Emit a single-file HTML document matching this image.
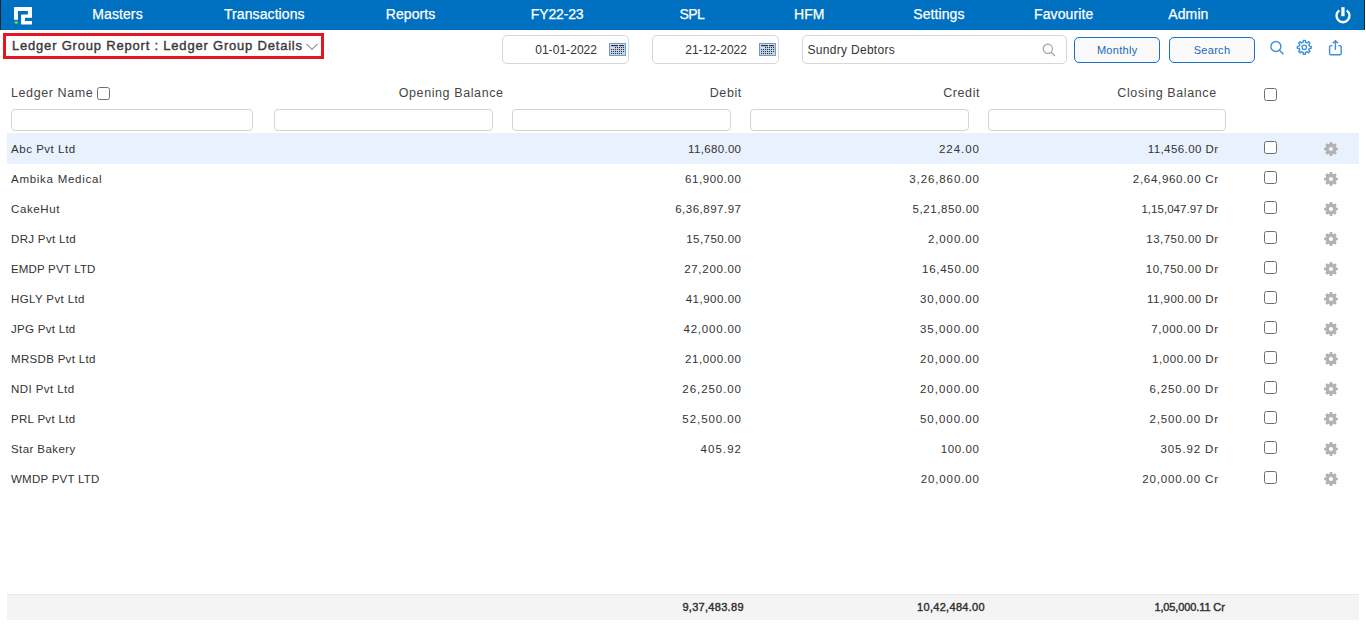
<!DOCTYPE html>
<html><head><meta charset="utf-8"><title>Ledger Group Report</title>
<style>
*{margin:0;padding:0;box-sizing:border-box}
html,body{width:1366px;height:625px;overflow:hidden;background:#fff}
body{position:relative;font-family:"Liberation Sans",sans-serif;color:#333}
.t{position:absolute;white-space:nowrap}
.a{position:absolute}
.nav{position:absolute;left:0;top:0;width:1365px;height:30px;background:#0070c0;border-left:1px solid #23262b;border-right:1px solid #23262b}
.inp{position:absolute;border:1px solid #d6d6d6;border-radius:5px;background:#fff}
.fil{position:absolute;top:109px;height:22px;border:1px solid #d3d3d3;border-radius:4px;background:#fff}
.btn{position:absolute;top:37px;width:86px;height:26px;border:1.5px solid #1672c8;border-radius:5px;background:#fafafa}
.cb{position:absolute;width:13px;height:13px;border:1px solid #6f6f6f;border-radius:2.5px;background:#fff}
.hl{position:absolute;left:7px;top:133px;width:1352px;height:31px;background:#e9f1fe}
.foot{position:absolute;left:7px;top:594px;width:1352px;height:26px;background:#f4f4f4;border-top:1px solid #eaeaea}
</style></head><body>
<div class="nav"></div>
<svg class="a" style="left:13px;top:6px" width="21" height="21" viewBox="0 0 21 21">
<path fill="#fff" stroke="#fff" stroke-width="1.2" stroke-linejoin="round" d="M1.6 1.7H18.4V11.2H11.4V15.5H18.4V17.9H8.7V9H15.5V4.3H4.4V13.2H1.6Z"/>
<circle cx="3.2" cy="16.5" r="1.7" fill="#3ee43a"/>
</svg>
<div class="t" style="top:5.75px;font-size:14px;line-height:16.8px;color:#fff;letter-spacing:0.1px;left:-82.5px;width:400px;text-align:center;-webkit-text-stroke:0.25px #fff;">Masters</div>
<div class="t" style="top:5.75px;font-size:14px;line-height:16.8px;color:#fff;letter-spacing:0.1px;left:64.30000000000001px;width:400px;text-align:center;-webkit-text-stroke:0.25px #fff;">Transactions</div>
<div class="t" style="top:5.75px;font-size:14px;line-height:16.8px;color:#fff;letter-spacing:0.1px;left:210.60000000000002px;width:400px;text-align:center;-webkit-text-stroke:0.25px #fff;">Reports</div>
<div class="t" style="top:5.75px;font-size:14px;line-height:16.8px;color:#fff;letter-spacing:-0.15px;left:357.20000000000005px;width:400px;text-align:center;-webkit-text-stroke:0.25px #fff;">FY22-23</div>
<div class="t" style="top:5.75px;font-size:14px;line-height:16.8px;color:#fff;letter-spacing:-0.6px;left:491.9px;width:400px;text-align:center;-webkit-text-stroke:0.25px #fff;">SPL</div>
<div class="t" style="top:5.75px;font-size:14px;line-height:16.8px;color:#fff;letter-spacing:0.1px;left:609.3px;width:400px;text-align:center;-webkit-text-stroke:0.25px #fff;">HFM</div>
<div class="t" style="top:5.75px;font-size:14px;line-height:16.8px;color:#fff;letter-spacing:0.1px;left:738.9px;width:400px;text-align:center;-webkit-text-stroke:0.25px #fff;">Settings</div>
<div class="t" style="top:5.75px;font-size:14px;line-height:16.8px;color:#fff;letter-spacing:0.1px;left:863.7px;width:400px;text-align:center;-webkit-text-stroke:0.25px #fff;">Favourite</div>
<div class="t" style="top:5.75px;font-size:14px;line-height:16.8px;color:#fff;letter-spacing:0.1px;left:988.4000000000001px;width:400px;text-align:center;-webkit-text-stroke:0.25px #fff;">Admin</div>
<svg class="a" style="left:1332.6px;top:5px" width="20" height="20" viewBox="0 0 20 20">
<path d="M6.3 5.4A6.5 6.5 0 1 0 13.7 5.4" fill="none" stroke="#fff" stroke-width="2.3"/>
<rect x="8.3" y="2.2" width="3.3" height="9" fill="#fff"/>
</svg>
<div class="a" style="left:3px;top:33px;width:321px;height:26px;border:3px solid #e8141f"></div>
<div class="t" style="top:37.70px;font-size:13px;line-height:15.6px;color:#3a3a3a;letter-spacing:0.8px;left:12px;-webkit-text-stroke:0.4px #3a3a3a;">Ledger Group Report : Ledger Group Details</div>
<svg class="a" style="left:305px;top:42px" width="14" height="10" viewBox="0 0 14 10"><path d="M1.5 2l5.5 5.5 5.5-5.5" fill="none" stroke="#9a9a9a" stroke-width="1.1"/></svg>
<div class="inp" style="left:502px;top:35px;width:127px;height:29px"></div>
<div class="t" style="top:42.94px;font-size:12px;line-height:14.4px;color:#333;letter-spacing:0.05px;right:768.95px;text-align:right;">01-01-2022</div>
<svg class="a" style="left:609px;top:43px" width="17" height="13" viewBox="0 0 17 13"><rect x="0.5" y="0.5" width="16" height="12" fill="#cadcf0" stroke="#6d9bd0"/><rect x="2" y="2" width="7" height="1.2" fill="#333"/><rect x="10" y="2" width="5" height="1.2" fill="#333"/><rect x="6" y="4" width="1.1" height="1.1" fill="#333"/><rect x="8" y="4" width="1.1" height="1.1" fill="#333"/><rect x="10" y="4" width="1.1" height="1.1" fill="#333"/><rect x="12" y="4" width="1.1" height="1.1" fill="#333"/><rect x="14" y="4" width="1.1" height="1.1" fill="#333"/><rect x="2" y="6" width="1.1" height="1.1" fill="#333"/><rect x="4" y="6" width="1.1" height="1.1" fill="#333"/><rect x="6" y="6" width="1.1" height="1.1" fill="#333"/><rect x="8" y="6" width="1.1" height="1.1" fill="#333"/><rect x="10" y="6" width="1.1" height="1.1" fill="#333"/><rect x="12" y="6" width="1.1" height="1.1" fill="#333"/><rect x="14" y="6" width="1.1" height="1.1" fill="#333"/><rect x="2" y="8" width="1.1" height="1.1" fill="#333"/><rect x="4" y="8" width="1.1" height="1.1" fill="#333"/><rect x="6" y="8" width="1.1" height="1.1" fill="#333"/><rect x="8" y="8" width="1.1" height="1.1" fill="#333"/><rect x="10" y="8" width="1.1" height="1.1" fill="#333"/><rect x="12" y="8" width="1.1" height="1.1" fill="#333"/><rect x="14" y="8" width="1.1" height="1.1" fill="#333"/><rect x="2" y="10" width="1.1" height="1.1" fill="#333"/><rect x="4" y="10" width="1.1" height="1.1" fill="#333"/><rect x="6" y="10" width="1.1" height="1.1" fill="#333"/><rect x="8" y="10" width="1.1" height="1.1" fill="#333"/><rect x="10" y="10" width="1.1" height="1.1" fill="#333"/><rect x="12" y="10" width="1.1" height="1.1" fill="#333"/></svg>
<div class="inp" style="left:652px;top:35px;width:127px;height:29px"></div>
<div class="t" style="top:42.94px;font-size:12px;line-height:14.4px;color:#333;letter-spacing:0.05px;right:618.95px;text-align:right;">21-12-2022</div>
<svg class="a" style="left:759px;top:43px" width="17" height="13" viewBox="0 0 17 13"><rect x="0.5" y="0.5" width="16" height="12" fill="#cadcf0" stroke="#6d9bd0"/><rect x="2" y="2" width="7" height="1.2" fill="#333"/><rect x="10" y="2" width="5" height="1.2" fill="#333"/><rect x="6" y="4" width="1.1" height="1.1" fill="#333"/><rect x="8" y="4" width="1.1" height="1.1" fill="#333"/><rect x="10" y="4" width="1.1" height="1.1" fill="#333"/><rect x="12" y="4" width="1.1" height="1.1" fill="#333"/><rect x="14" y="4" width="1.1" height="1.1" fill="#333"/><rect x="2" y="6" width="1.1" height="1.1" fill="#333"/><rect x="4" y="6" width="1.1" height="1.1" fill="#333"/><rect x="6" y="6" width="1.1" height="1.1" fill="#333"/><rect x="8" y="6" width="1.1" height="1.1" fill="#333"/><rect x="10" y="6" width="1.1" height="1.1" fill="#333"/><rect x="12" y="6" width="1.1" height="1.1" fill="#333"/><rect x="14" y="6" width="1.1" height="1.1" fill="#333"/><rect x="2" y="8" width="1.1" height="1.1" fill="#333"/><rect x="4" y="8" width="1.1" height="1.1" fill="#333"/><rect x="6" y="8" width="1.1" height="1.1" fill="#333"/><rect x="8" y="8" width="1.1" height="1.1" fill="#333"/><rect x="10" y="8" width="1.1" height="1.1" fill="#333"/><rect x="12" y="8" width="1.1" height="1.1" fill="#333"/><rect x="14" y="8" width="1.1" height="1.1" fill="#333"/><rect x="2" y="10" width="1.1" height="1.1" fill="#333"/><rect x="4" y="10" width="1.1" height="1.1" fill="#333"/><rect x="6" y="10" width="1.1" height="1.1" fill="#333"/><rect x="8" y="10" width="1.1" height="1.1" fill="#333"/><rect x="10" y="10" width="1.1" height="1.1" fill="#333"/><rect x="12" y="10" width="1.1" height="1.1" fill="#333"/></svg>
<div class="inp" style="left:802px;top:35px;width:265px;height:29px"></div>
<div class="t" style="top:42.94px;font-size:12px;line-height:14.4px;color:#333;letter-spacing:0.3px;left:807.5px;">Sundry Debtors</div>
<svg class="a" style="left:1042px;top:43px" width="14" height="14" viewBox="0 0 14 14"><circle cx="5.8" cy="5.8" r="4.6" fill="none" stroke="#a3a3a3" stroke-width="1.2"/><path d="M9.2 9.2l3.8 3.8" stroke="#a3a3a3" stroke-width="1.3"/></svg>
<div class="btn" style="left:1074px"></div>
<div class="t" style="top:43.59px;font-size:11px;line-height:13.2px;color:#2366bd;letter-spacing:0.3px;left:917.2px;width:400px;text-align:center;">Monthly</div>
<div class="btn" style="left:1169px"></div>
<div class="t" style="top:43.59px;font-size:11px;line-height:13.2px;color:#2366bd;letter-spacing:0.3px;left:1012px;width:400px;text-align:center;">Search</div>
<svg class="a" style="left:1269px;top:40px" width="16" height="16" viewBox="0 0 16 16"><circle cx="6.9" cy="6.5" r="5" fill="none" stroke="#3e8fd7" stroke-width="1.4"/><path d="M10.4 10.2l4 4" stroke="#3e8fd7" stroke-width="1.5"/></svg>
<svg class="a" style="left:1296px;top:39px" width="17" height="17" viewBox="0 0 17 17"><path d="M7.09 3.24 L7.35 1.37 L9.25 1.37 L9.51 3.24 L11.02 3.87 L12.53 2.72 L13.88 4.07 L12.73 5.58 L13.36 7.09 L15.23 7.35 L15.23 9.25 L13.36 9.51 L12.73 11.02 L13.88 12.53 L12.53 13.88 L11.02 12.73 L9.51 13.36 L9.25 15.23 L7.35 15.23 L7.09 13.36 L5.58 12.73 L4.07 13.88 L2.72 12.53 L3.87 11.02 L3.24 9.51 L1.37 9.25 L1.37 7.35 L3.24 7.09 L3.87 5.58 L2.72 4.07 L4.07 2.72 L5.58 3.87Z" fill="none" stroke="#3e8fd7" stroke-width="1.4" stroke-linejoin="round"/><circle cx="8.3" cy="8.3" r="2.2" fill="none" stroke="#3e8fd7" stroke-width="1.3"/></svg>
<svg class="a" style="left:1327px;top:39px" width="17" height="17" viewBox="0 0 17 17"><path d="M5.5 6.6H3.9a1.3 1.3 0 0 0-1.3 1.3v6.5a1.3 1.3 0 0 0 1.3 1.3h9a1.3 1.3 0 0 0 1.3-1.3V7.9a1.3 1.3 0 0 0-1.3-1.3H11.3" fill="none" stroke="#3e8fd7" stroke-width="1.4"/><path d="M8.4 11V1.8M5.8 4.3l2.6-2.6 2.6 2.6" fill="none" stroke="#3e8fd7" stroke-width="1.4"/></svg>
<div class="t" style="top:86.17px;font-size:12.5px;line-height:15.0px;color:#454545;letter-spacing:0.6px;left:11px;">Ledger Name</div>
<div class="cb" style="left:97px;top:87px"></div>
<div class="t" style="top:86.17px;font-size:12.5px;line-height:15.0px;color:#454545;letter-spacing:0.6px;right:862.40px;text-align:right;">Opening Balance</div>
<div class="t" style="top:86.17px;font-size:12.5px;line-height:15.0px;color:#454545;letter-spacing:0.6px;right:624.10px;text-align:right;">Debit</div>
<div class="t" style="top:86.17px;font-size:12.5px;line-height:15.0px;color:#454545;letter-spacing:0.6px;right:385.90px;text-align:right;">Credit</div>
<div class="t" style="top:86.17px;font-size:12.5px;line-height:15.0px;color:#454545;letter-spacing:0.6px;right:149.30px;text-align:right;">Closing Balance</div>
<div class="cb" style="left:1264px;top:88px"></div>
<div class="fil" style="left:11px;width:242px"></div>
<div class="fil" style="left:274px;width:219px"></div>
<div class="fil" style="left:512px;width:219px"></div>
<div class="fil" style="left:750px;width:219px"></div>
<div class="fil" style="left:988px;width:238px"></div>
<div class="hl"></div>
<div class="t" style="top:143.12px;font-size:11.5px;line-height:13.8px;color:#333;letter-spacing:0.53px;left:11px;">Abc Pvt Ltd</div>
<div class="t" style="top:143.12px;font-size:11.5px;line-height:13.8px;color:#333;letter-spacing:0.325px;right:624.67px;text-align:right;">11,680.00</div>
<div class="t" style="top:143.12px;font-size:11.5px;line-height:13.8px;color:#333;letter-spacing:0.98px;right:386.02px;text-align:right;">224.00</div>
<div class="t" style="top:143.12px;font-size:11.5px;line-height:13.8px;color:#333;letter-spacing:0.426px;right:147.57px;text-align:right;">11,456.00 Dr</div>
<div class="cb" style="left:1264px;top:141px"></div>
<svg class="a" style="left:1324px;top:142px" width="14" height="14" viewBox="0 0 14 14"><path fill="#b2b2b2" fill-rule="evenodd" d="M5.43 1.94 L5.78 0.11 L8.22 0.11 L8.57 1.94 L9.47 2.31 L11.01 1.26 L12.74 2.99 L11.69 4.53 L12.06 5.43 L13.89 5.78 L13.89 8.22 L12.06 8.57 L11.69 9.47 L12.74 11.01 L11.01 12.74 L9.47 11.69 L8.57 12.06 L8.22 13.89 L5.78 13.89 L5.43 12.06 L4.53 11.69 L2.99 12.74 L1.26 11.01 L2.31 9.47 L1.94 8.57 L0.11 8.22 L0.11 5.78 L1.94 5.43 L2.31 4.53 L1.26 2.99 L2.99 1.26 L4.53 2.31Z M9.1 7A2.1 2.1 0 1 0 4.9 7A2.1 2.1 0 1 0 9.1 7Z"/></svg>
<div class="t" style="top:173.12px;font-size:11.5px;line-height:13.8px;color:#333;letter-spacing:0.727px;left:11px;">Ambika Medical</div>
<div class="t" style="top:173.12px;font-size:11.5px;line-height:13.8px;color:#333;letter-spacing:0.6px;right:624.40px;text-align:right;">61,900.00</div>
<div class="t" style="top:173.12px;font-size:11.5px;line-height:13.8px;color:#333;letter-spacing:0.9px;right:386.10px;text-align:right;">3,26,860.00</div>
<div class="t" style="top:173.12px;font-size:11.5px;line-height:13.8px;color:#333;letter-spacing:0.699px;right:147.30px;text-align:right;">2,64,960.00 Cr</div>
<div class="cb" style="left:1264px;top:171px"></div>
<svg class="a" style="left:1324px;top:172px" width="14" height="14" viewBox="0 0 14 14"><path fill="#b2b2b2" fill-rule="evenodd" d="M5.43 1.94 L5.78 0.11 L8.22 0.11 L8.57 1.94 L9.47 2.31 L11.01 1.26 L12.74 2.99 L11.69 4.53 L12.06 5.43 L13.89 5.78 L13.89 8.22 L12.06 8.57 L11.69 9.47 L12.74 11.01 L11.01 12.74 L9.47 11.69 L8.57 12.06 L8.22 13.89 L5.78 13.89 L5.43 12.06 L4.53 11.69 L2.99 12.74 L1.26 11.01 L2.31 9.47 L1.94 8.57 L0.11 8.22 L0.11 5.78 L1.94 5.43 L2.31 4.53 L1.26 2.99 L2.99 1.26 L4.53 2.31Z M9.1 7A2.1 2.1 0 1 0 4.9 7A2.1 2.1 0 1 0 9.1 7Z"/></svg>
<div class="t" style="top:203.12px;font-size:11.5px;line-height:13.8px;color:#333;letter-spacing:0.616px;left:11px;">CakeHut</div>
<div class="t" style="top:203.12px;font-size:11.5px;line-height:13.8px;color:#333;letter-spacing:0.51px;right:624.49px;text-align:right;">6,36,897.97</div>
<div class="t" style="top:203.12px;font-size:11.5px;line-height:13.8px;color:#333;letter-spacing:0.57px;right:386.43px;text-align:right;">5,21,850.00</div>
<div class="t" style="top:203.12px;font-size:11.5px;line-height:13.8px;color:#333;letter-spacing:0.038px;right:147.96px;text-align:right;">1,15,047.97 Dr</div>
<div class="cb" style="left:1264px;top:201px"></div>
<svg class="a" style="left:1324px;top:202px" width="14" height="14" viewBox="0 0 14 14"><path fill="#b2b2b2" fill-rule="evenodd" d="M5.43 1.94 L5.78 0.11 L8.22 0.11 L8.57 1.94 L9.47 2.31 L11.01 1.26 L12.74 2.99 L11.69 4.53 L12.06 5.43 L13.89 5.78 L13.89 8.22 L12.06 8.57 L11.69 9.47 L12.74 11.01 L11.01 12.74 L9.47 11.69 L8.57 12.06 L8.22 13.89 L5.78 13.89 L5.43 12.06 L4.53 11.69 L2.99 12.74 L1.26 11.01 L2.31 9.47 L1.94 8.57 L0.11 8.22 L0.11 5.78 L1.94 5.43 L2.31 4.53 L1.26 2.99 L2.99 1.26 L4.53 2.31Z M9.1 7A2.1 2.1 0 1 0 4.9 7A2.1 2.1 0 1 0 9.1 7Z"/></svg>
<div class="t" style="top:233.12px;font-size:11.5px;line-height:13.8px;color:#333;letter-spacing:0.33px;left:11px;">DRJ Pvt Ltd</div>
<div class="t" style="top:233.12px;font-size:11.5px;line-height:13.8px;color:#333;letter-spacing:0.45px;right:624.55px;text-align:right;">15,750.00</div>
<div class="t" style="top:233.12px;font-size:11.5px;line-height:13.8px;color:#333;letter-spacing:0.9px;right:386.10px;text-align:right;">2,000.00</div>
<div class="t" style="top:233.12px;font-size:11.5px;line-height:13.8px;color:#333;letter-spacing:0.473px;right:147.53px;text-align:right;">13,750.00 Dr</div>
<div class="cb" style="left:1264px;top:231px"></div>
<svg class="a" style="left:1324px;top:232px" width="14" height="14" viewBox="0 0 14 14"><path fill="#b2b2b2" fill-rule="evenodd" d="M5.43 1.94 L5.78 0.11 L8.22 0.11 L8.57 1.94 L9.47 2.31 L11.01 1.26 L12.74 2.99 L11.69 4.53 L12.06 5.43 L13.89 5.78 L13.89 8.22 L12.06 8.57 L11.69 9.47 L12.74 11.01 L11.01 12.74 L9.47 11.69 L8.57 12.06 L8.22 13.89 L5.78 13.89 L5.43 12.06 L4.53 11.69 L2.99 12.74 L1.26 11.01 L2.31 9.47 L1.94 8.57 L0.11 8.22 L0.11 5.78 L1.94 5.43 L2.31 4.53 L1.26 2.99 L2.99 1.26 L4.53 2.31Z M9.1 7A2.1 2.1 0 1 0 4.9 7A2.1 2.1 0 1 0 9.1 7Z"/></svg>
<div class="t" style="top:263.12px;font-size:11.5px;line-height:13.8px;color:#333;letter-spacing:0.177px;left:11px;">EMDP PVT LTD</div>
<div class="t" style="top:263.12px;font-size:11.5px;line-height:13.8px;color:#333;letter-spacing:0.711px;right:624.29px;text-align:right;">27,200.00</div>
<div class="t" style="top:263.12px;font-size:11.5px;line-height:13.8px;color:#333;letter-spacing:0.725px;right:386.27px;text-align:right;">16,450.00</div>
<div class="t" style="top:263.12px;font-size:11.5px;line-height:13.8px;color:#333;letter-spacing:0.527px;right:147.47px;text-align:right;">10,750.00 Dr</div>
<div class="cb" style="left:1264px;top:261px"></div>
<svg class="a" style="left:1324px;top:262px" width="14" height="14" viewBox="0 0 14 14"><path fill="#b2b2b2" fill-rule="evenodd" d="M5.43 1.94 L5.78 0.11 L8.22 0.11 L8.57 1.94 L9.47 2.31 L11.01 1.26 L12.74 2.99 L11.69 4.53 L12.06 5.43 L13.89 5.78 L13.89 8.22 L12.06 8.57 L11.69 9.47 L12.74 11.01 L11.01 12.74 L9.47 11.69 L8.57 12.06 L8.22 13.89 L5.78 13.89 L5.43 12.06 L4.53 11.69 L2.99 12.74 L1.26 11.01 L2.31 9.47 L1.94 8.57 L0.11 8.22 L0.11 5.78 L1.94 5.43 L2.31 4.53 L1.26 2.99 L2.99 1.26 L4.53 2.31Z M9.1 7A2.1 2.1 0 1 0 4.9 7A2.1 2.1 0 1 0 9.1 7Z"/></svg>
<div class="t" style="top:293.12px;font-size:11.5px;line-height:13.8px;color:#333;letter-spacing:0.377px;left:11px;">HGLY Pvt Ltd</div>
<div class="t" style="top:293.12px;font-size:11.5px;line-height:13.8px;color:#333;letter-spacing:0.525px;right:624.48px;text-align:right;">41,900.00</div>
<div class="t" style="top:293.12px;font-size:11.5px;line-height:13.8px;color:#333;letter-spacing:0.986px;right:386.01px;text-align:right;">30,000.00</div>
<div class="t" style="top:293.12px;font-size:11.5px;line-height:13.8px;color:#333;letter-spacing:0.49px;right:147.51px;text-align:right;">11,900.00 Dr</div>
<div class="cb" style="left:1264px;top:291px"></div>
<svg class="a" style="left:1324px;top:292px" width="14" height="14" viewBox="0 0 14 14"><path fill="#b2b2b2" fill-rule="evenodd" d="M5.43 1.94 L5.78 0.11 L8.22 0.11 L8.57 1.94 L9.47 2.31 L11.01 1.26 L12.74 2.99 L11.69 4.53 L12.06 5.43 L13.89 5.78 L13.89 8.22 L12.06 8.57 L11.69 9.47 L12.74 11.01 L11.01 12.74 L9.47 11.69 L8.57 12.06 L8.22 13.89 L5.78 13.89 L5.43 12.06 L4.53 11.69 L2.99 12.74 L1.26 11.01 L2.31 9.47 L1.94 8.57 L0.11 8.22 L0.11 5.78 L1.94 5.43 L2.31 4.53 L1.26 2.99 L2.99 1.26 L4.53 2.31Z M9.1 7A2.1 2.1 0 1 0 4.9 7A2.1 2.1 0 1 0 9.1 7Z"/></svg>
<div class="t" style="top:323.12px;font-size:11.5px;line-height:13.8px;color:#333;letter-spacing:0.29px;left:11px;">JPG Pvt Ltd</div>
<div class="t" style="top:323.12px;font-size:11.5px;line-height:13.8px;color:#333;letter-spacing:0.8px;right:624.20px;text-align:right;">42,000.00</div>
<div class="t" style="top:323.12px;font-size:11.5px;line-height:13.8px;color:#333;letter-spacing:0.986px;right:386.01px;text-align:right;">35,000.00</div>
<div class="t" style="top:323.12px;font-size:11.5px;line-height:13.8px;color:#333;letter-spacing:0.67px;right:147.33px;text-align:right;">7,000.00 Dr</div>
<div class="cb" style="left:1264px;top:321px"></div>
<svg class="a" style="left:1324px;top:322px" width="14" height="14" viewBox="0 0 14 14"><path fill="#b2b2b2" fill-rule="evenodd" d="M5.43 1.94 L5.78 0.11 L8.22 0.11 L8.57 1.94 L9.47 2.31 L11.01 1.26 L12.74 2.99 L11.69 4.53 L12.06 5.43 L13.89 5.78 L13.89 8.22 L12.06 8.57 L11.69 9.47 L12.74 11.01 L11.01 12.74 L9.47 11.69 L8.57 12.06 L8.22 13.89 L5.78 13.89 L5.43 12.06 L4.53 11.69 L2.99 12.74 L1.26 11.01 L2.31 9.47 L1.94 8.57 L0.11 8.22 L0.11 5.78 L1.94 5.43 L2.31 4.53 L1.26 2.99 L2.99 1.26 L4.53 2.31Z M9.1 7A2.1 2.1 0 1 0 4.9 7A2.1 2.1 0 1 0 9.1 7Z"/></svg>
<div class="t" style="top:353.12px;font-size:11.5px;line-height:13.8px;color:#333;letter-spacing:0.317px;left:11px;">MRSDB Pvt Ltd</div>
<div class="t" style="top:353.12px;font-size:11.5px;line-height:13.8px;color:#333;letter-spacing:0.6px;right:624.40px;text-align:right;">21,000.00</div>
<div class="t" style="top:353.12px;font-size:11.5px;line-height:13.8px;color:#333;letter-spacing:0.986px;right:386.01px;text-align:right;">20,000.00</div>
<div class="t" style="top:353.12px;font-size:11.5px;line-height:13.8px;color:#333;letter-spacing:0.6px;right:147.40px;text-align:right;">1,000.00 Dr</div>
<div class="cb" style="left:1264px;top:351px"></div>
<svg class="a" style="left:1324px;top:352px" width="14" height="14" viewBox="0 0 14 14"><path fill="#b2b2b2" fill-rule="evenodd" d="M5.43 1.94 L5.78 0.11 L8.22 0.11 L8.57 1.94 L9.47 2.31 L11.01 1.26 L12.74 2.99 L11.69 4.53 L12.06 5.43 L13.89 5.78 L13.89 8.22 L12.06 8.57 L11.69 9.47 L12.74 11.01 L11.01 12.74 L9.47 11.69 L8.57 12.06 L8.22 13.89 L5.78 13.89 L5.43 12.06 L4.53 11.69 L2.99 12.74 L1.26 11.01 L2.31 9.47 L1.94 8.57 L0.11 8.22 L0.11 5.78 L1.94 5.43 L2.31 4.53 L1.26 2.99 L2.99 1.26 L4.53 2.31Z M9.1 7A2.1 2.1 0 1 0 4.9 7A2.1 2.1 0 1 0 9.1 7Z"/></svg>
<div class="t" style="top:383.12px;font-size:11.5px;line-height:13.8px;color:#333;letter-spacing:0.43px;left:11px;">NDI Pvt Ltd</div>
<div class="t" style="top:383.12px;font-size:11.5px;line-height:13.8px;color:#333;letter-spacing:0.938px;right:624.06px;text-align:right;">26,250.00</div>
<div class="t" style="top:383.12px;font-size:11.5px;line-height:13.8px;color:#333;letter-spacing:0.986px;right:386.01px;text-align:right;">20,000.00</div>
<div class="t" style="top:383.12px;font-size:11.5px;line-height:13.8px;color:#333;letter-spacing:0.84px;right:147.16px;text-align:right;">6,250.00 Dr</div>
<div class="cb" style="left:1264px;top:381px"></div>
<svg class="a" style="left:1324px;top:382px" width="14" height="14" viewBox="0 0 14 14"><path fill="#b2b2b2" fill-rule="evenodd" d="M5.43 1.94 L5.78 0.11 L8.22 0.11 L8.57 1.94 L9.47 2.31 L11.01 1.26 L12.74 2.99 L11.69 4.53 L12.06 5.43 L13.89 5.78 L13.89 8.22 L12.06 8.57 L11.69 9.47 L12.74 11.01 L11.01 12.74 L9.47 11.69 L8.57 12.06 L8.22 13.89 L5.78 13.89 L5.43 12.06 L4.53 11.69 L2.99 12.74 L1.26 11.01 L2.31 9.47 L1.94 8.57 L0.11 8.22 L0.11 5.78 L1.94 5.43 L2.31 4.53 L1.26 2.99 L2.99 1.26 L4.53 2.31Z M9.1 7A2.1 2.1 0 1 0 4.9 7A2.1 2.1 0 1 0 9.1 7Z"/></svg>
<div class="t" style="top:413.12px;font-size:11.5px;line-height:13.8px;color:#333;letter-spacing:0.31px;left:11px;">PRL Pvt Ltd</div>
<div class="t" style="top:413.12px;font-size:11.5px;line-height:13.8px;color:#333;letter-spacing:0.938px;right:624.06px;text-align:right;">52,500.00</div>
<div class="t" style="top:413.12px;font-size:11.5px;line-height:13.8px;color:#333;letter-spacing:0.986px;right:386.01px;text-align:right;">50,000.00</div>
<div class="t" style="top:413.12px;font-size:11.5px;line-height:13.8px;color:#333;letter-spacing:0.84px;right:147.16px;text-align:right;">2,500.00 Dr</div>
<div class="cb" style="left:1264px;top:411px"></div>
<svg class="a" style="left:1324px;top:412px" width="14" height="14" viewBox="0 0 14 14"><path fill="#b2b2b2" fill-rule="evenodd" d="M5.43 1.94 L5.78 0.11 L8.22 0.11 L8.57 1.94 L9.47 2.31 L11.01 1.26 L12.74 2.99 L11.69 4.53 L12.06 5.43 L13.89 5.78 L13.89 8.22 L12.06 8.57 L11.69 9.47 L12.74 11.01 L11.01 12.74 L9.47 11.69 L8.57 12.06 L8.22 13.89 L5.78 13.89 L5.43 12.06 L4.53 11.69 L2.99 12.74 L1.26 11.01 L2.31 9.47 L1.94 8.57 L0.11 8.22 L0.11 5.78 L1.94 5.43 L2.31 4.53 L1.26 2.99 L2.99 1.26 L4.53 2.31Z M9.1 7A2.1 2.1 0 1 0 4.9 7A2.1 2.1 0 1 0 9.1 7Z"/></svg>
<div class="t" style="top:443.12px;font-size:11.5px;line-height:13.8px;color:#333;letter-spacing:0.41px;left:11px;">Star Bakery</div>
<div class="t" style="top:443.12px;font-size:11.5px;line-height:13.8px;color:#333;letter-spacing:1.08px;right:623.92px;text-align:right;">405.92</div>
<div class="t" style="top:443.12px;font-size:11.5px;line-height:13.8px;color:#333;letter-spacing:0.64px;right:386.36px;text-align:right;">100.00</div>
<div class="t" style="top:443.12px;font-size:11.5px;line-height:13.8px;color:#333;letter-spacing:0.861px;right:147.14px;text-align:right;">305.92 Dr</div>
<div class="cb" style="left:1264px;top:441px"></div>
<svg class="a" style="left:1324px;top:442px" width="14" height="14" viewBox="0 0 14 14"><path fill="#b2b2b2" fill-rule="evenodd" d="M5.43 1.94 L5.78 0.11 L8.22 0.11 L8.57 1.94 L9.47 2.31 L11.01 1.26 L12.74 2.99 L11.69 4.53 L12.06 5.43 L13.89 5.78 L13.89 8.22 L12.06 8.57 L11.69 9.47 L12.74 11.01 L11.01 12.74 L9.47 11.69 L8.57 12.06 L8.22 13.89 L5.78 13.89 L5.43 12.06 L4.53 11.69 L2.99 12.74 L1.26 11.01 L2.31 9.47 L1.94 8.57 L0.11 8.22 L0.11 5.78 L1.94 5.43 L2.31 4.53 L1.26 2.99 L2.99 1.26 L4.53 2.31Z M9.1 7A2.1 2.1 0 1 0 4.9 7A2.1 2.1 0 1 0 9.1 7Z"/></svg>
<div class="t" style="top:473.12px;font-size:11.5px;line-height:13.8px;color:#333;letter-spacing:0.25px;left:11px;">WMDP PVT LTD</div>
<div class="t" style="top:473.12px;font-size:11.5px;line-height:13.8px;color:#333;letter-spacing:0.9px;right:386.10px;text-align:right;">20,000.00</div>
<div class="t" style="top:473.12px;font-size:11.5px;line-height:13.8px;color:#333;letter-spacing:0.837px;right:147.16px;text-align:right;">20,000.00 Cr</div>
<div class="cb" style="left:1264px;top:471px"></div>
<svg class="a" style="left:1324px;top:472px" width="14" height="14" viewBox="0 0 14 14"><path fill="#b2b2b2" fill-rule="evenodd" d="M5.43 1.94 L5.78 0.11 L8.22 0.11 L8.57 1.94 L9.47 2.31 L11.01 1.26 L12.74 2.99 L11.69 4.53 L12.06 5.43 L13.89 5.78 L13.89 8.22 L12.06 8.57 L11.69 9.47 L12.74 11.01 L11.01 12.74 L9.47 11.69 L8.57 12.06 L8.22 13.89 L5.78 13.89 L5.43 12.06 L4.53 11.69 L2.99 12.74 L1.26 11.01 L2.31 9.47 L1.94 8.57 L0.11 8.22 L0.11 5.78 L1.94 5.43 L2.31 4.53 L1.26 2.99 L2.99 1.26 L4.53 2.31Z M9.1 7A2.1 2.1 0 1 0 4.9 7A2.1 2.1 0 1 0 9.1 7Z"/></svg>
<div class="foot"></div>
<div class="t" style="top:600.59px;font-size:11px;line-height:13.2px;color:#2f2f2f;letter-spacing:0.3px;right:622.20px;text-align:right;-webkit-text-stroke:0.4px #2f2f2f;">9,37,483.89</div>
<div class="t" style="top:600.59px;font-size:11px;line-height:13.2px;color:#2f2f2f;letter-spacing:0.3px;right:381.10px;text-align:right;-webkit-text-stroke:0.4px #2f2f2f;">10,42,484.00</div>
<div class="t" style="top:600.59px;font-size:11px;line-height:13.2px;color:#2f2f2f;letter-spacing:-0.12px;right:141.32px;text-align:right;-webkit-text-stroke:0.4px #2f2f2f;">1,05,000.11 Cr</div>
</body></html>
